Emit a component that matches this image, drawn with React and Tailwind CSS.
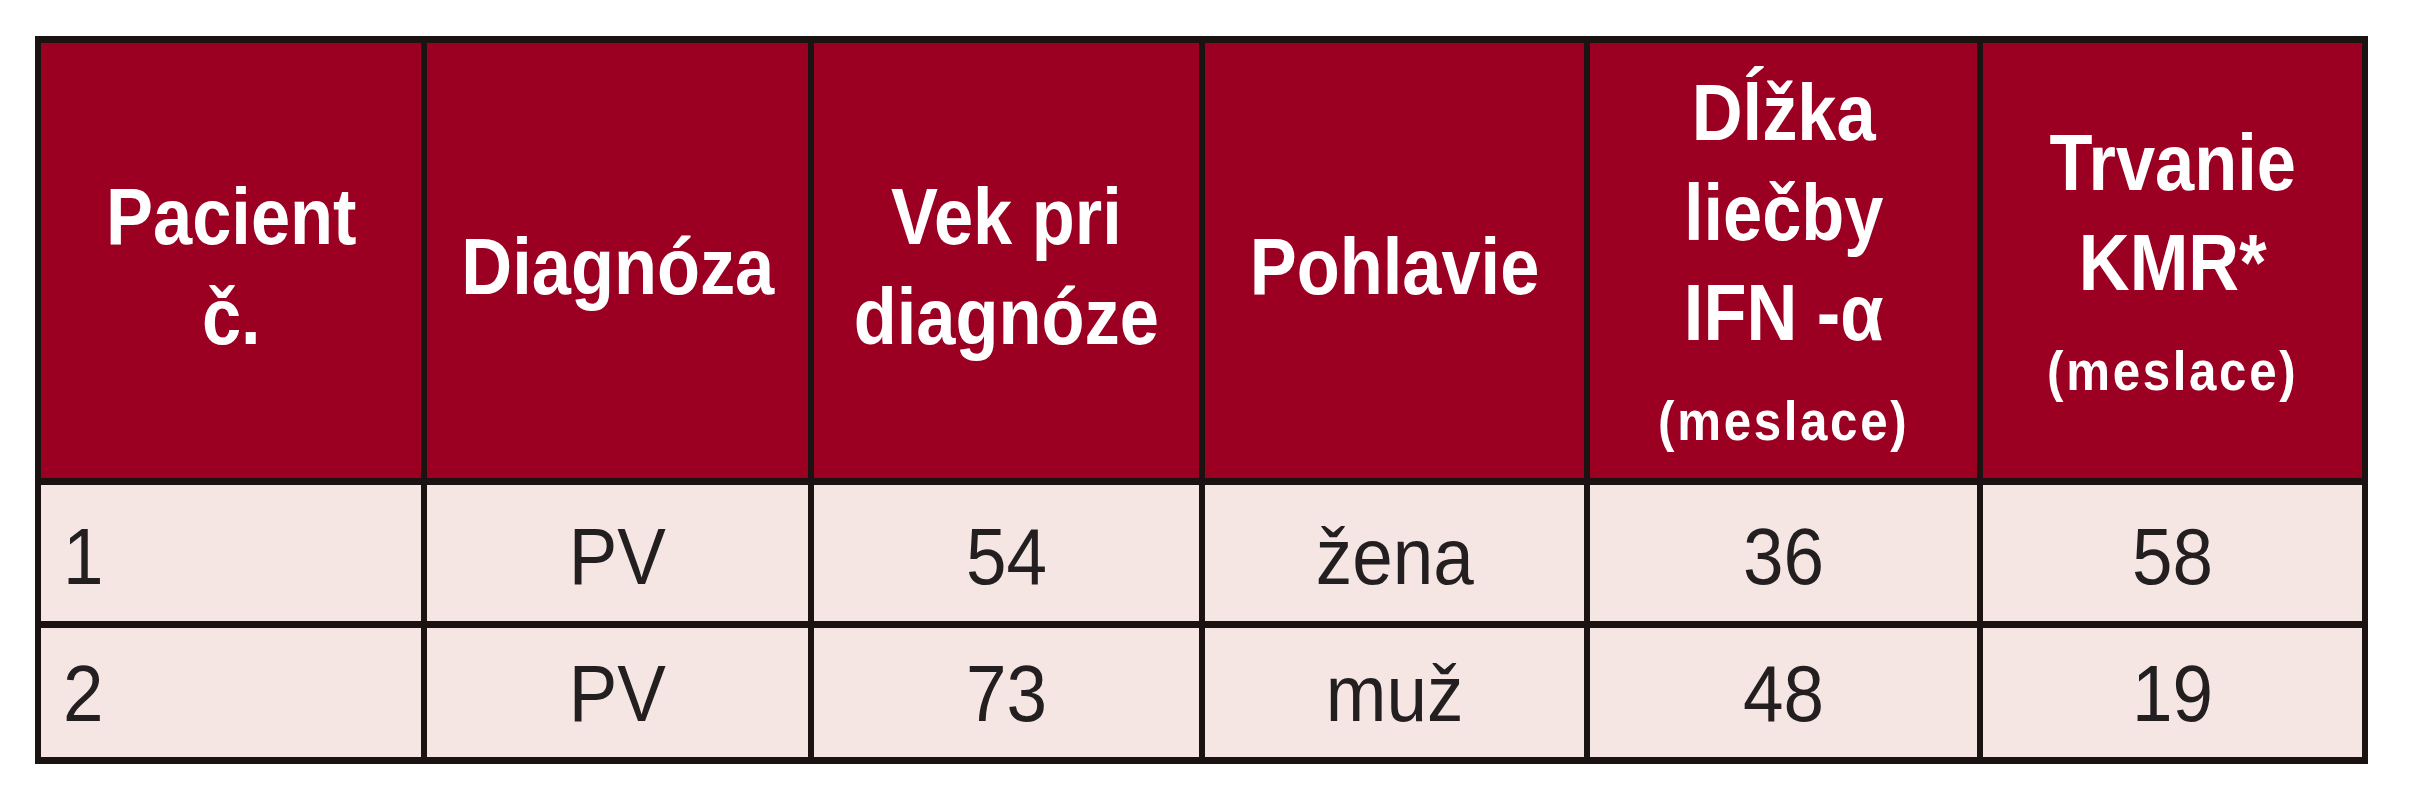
import React from 'react';

// Patient table: header row + two data rows
const headers = [
  { lines: ['Pacient', 'č.'] },
  { lines: ['Diagnóza'] },
  { lines: ['Vek pri', 'diagnóze'] },
  { lines: ['Pohlavie'] },
  { lines: ['Dĺžka', 'liečby', 'IFN -α'], note: '(meslace)' },
  { lines: ['Trvanie', 'KMR*'], note: '(meslace)' },
];

const rows = [
  ['1', 'PV', '54', 'žena', '36', '58'],
  ['2', 'PV', '73', 'muž', '48', '19'],
];

const App = () => {
  return (
    <div className="min-h-screen bg-white pl-[35px] pt-[36px] font-['Liberation_Sans',Arial,sans-serif]">
      <div className="inline-grid grid-cols-[380px_381px_385px_379px_387px_379px] grid-rows-[435px_136px_129px] gap-x-[6px] gap-y-[7px] bg-[#1b1311] px-[6px] py-[7px]">
        {/* Header */}
        {headers.map((h, idx) => (
          <div
            key={idx}
            className="bg-[#9b0022] flex items-center justify-center pt-[12px] text-white font-bold text-[80px] leading-[100px] text-center"
          >
            <div className="scale-x-[0.88] whitespace-nowrap">
              {h.lines.map((line, i) => (
                <React.Fragment key={i}>
                  {i > 0 && <br />}
                  {line}
                </React.Fragment>
              ))}
              {h.note && (
                <>
                  <br />
                  <span className="text-[56px] tracking-[3px]">{h.note}</span>
                </>
              )}
            </div>
          </div>
        ))}

        {/* Rows */}
        {rows.map((row, r) =>
          row.map((cell, c) => (
            <div
              key={`${r}-${c}`}
              className={`bg-[#f5e6e3] flex items-center text-[#231f20] text-[80px] leading-none ${
                r === 0 ? 'pt-[8px]' : 'pt-[2px]'
              } ${c === 0 ? 'justify-start pl-[22px]' : 'justify-center'}`}
            >
              <span className={`inline-block scale-x-[0.91] ${c === 0 ? 'origin-left' : ''}`}>{cell}</span>
            </div>
          ))
        )}
      </div>
    </div>
  );
};

export default App;
